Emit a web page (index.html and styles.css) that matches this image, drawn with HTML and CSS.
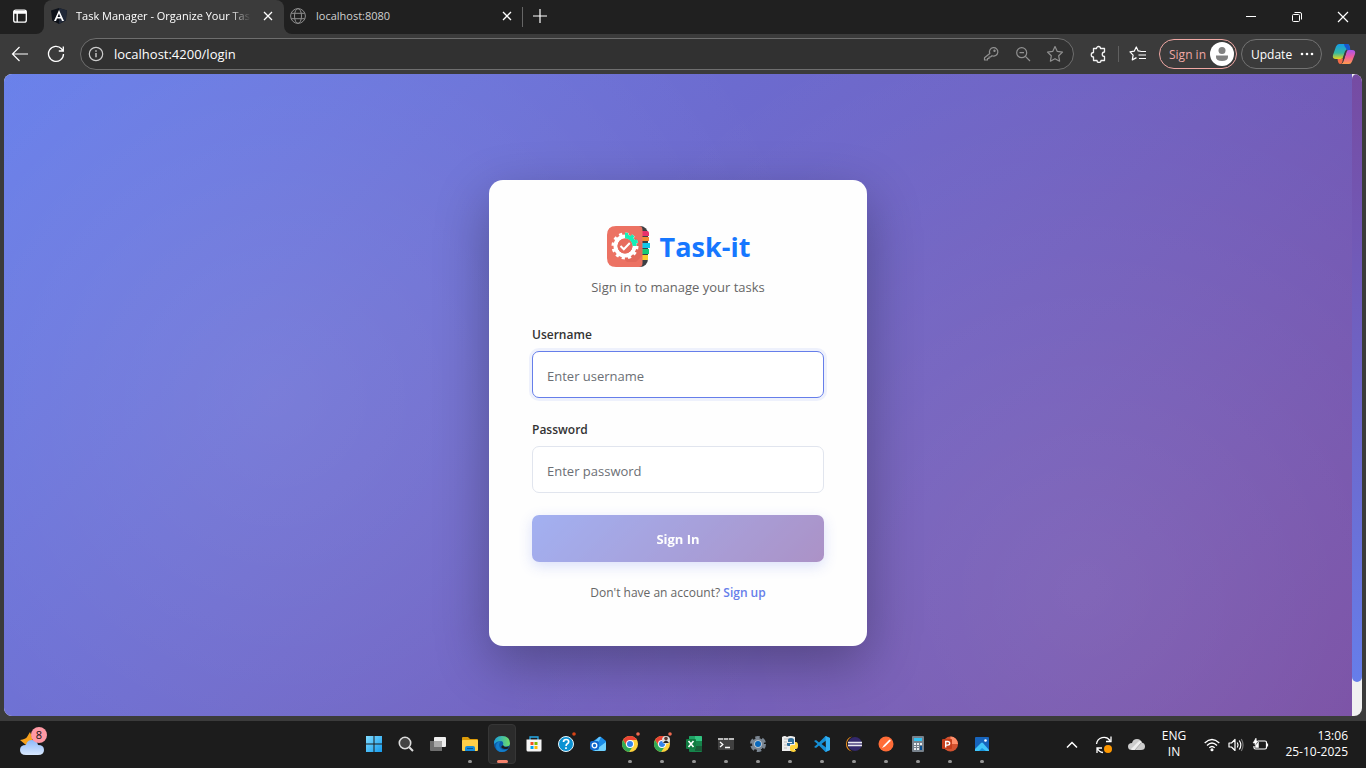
FILE: index.html
```
<!DOCTYPE html>
<html lang="en">
<head>
<meta charset="utf-8">
<meta name="viewport" content="width=device-width, initial-scale=1">
<title>Task Manager - Organize Your Tasks</title>
<link rel="stylesheet" href="styles.css">
</head>
<body>
<div class="desktop">
  <header class="browser">
    <div class="tabstrip">
      <div class="strip-start">
        <button class="icon-btn" type="button" aria-label="Tab actions">
          <svg width="16" height="16" viewBox="0 0 16 16" fill="none" stroke="#fff" stroke-width="1.3"><rect x="1.7" y="2.2" width="12.6" height="12" rx="2"/><path d="M1.7 3.7h12.6M2 5h12M5.2 5v9" stroke-width="1.4"/></svg>
        </button>
      </div>
      <div class="tab tab-active">
        <svg width="16" height="16" viewBox="0 0 16 16"><path d="M8 0l8 2.6-1.2 10L8 16l-6.800-3.400L0 2.600z" fill="#0d1119"/><path d="M8 0l8 2.600-1.200 10L8 16z" fill="#202838"/><path d="M8 2L3 13h2l1-2.500h4l1 2.500h2zm0 3.500L9.400 9H6.600z" fill="#fff"/></svg>
        <span class="tab-title">Task Manager - Organize Your Tas</span>
        <button class="close-btn" type="button" aria-label="Close tab"><svg width="10" height="10" viewBox="0 0 10 10" stroke="#fff" stroke-width="1.3"><path d="M1 1l8 8M9 1l-8 8"/></svg></button>
      </div>
      <div class="strip-rest">
        <div class="tab tab-idle">
          <svg width="16" height="16" viewBox="0 0 16 16" fill="none" stroke="#8d8d8d"><circle cx="8" cy="8" r="7.400"/><ellipse cx="8" cy="8" rx="3.500" ry="7.400"/><path d="M1.200 5.300h13.600M1.200 10.700h13.600"/></svg>
          <span class="tab-title">localhost:8080</span>
          <button class="close-btn" type="button" aria-label="Close tab"><svg width="10" height="10" viewBox="0 0 10 10" stroke="#fff" stroke-width="1.3"><path d="M1 1l8 8M9 1l-8 8"/></svg></button>
        </div>
        <button class="new-tab" type="button" aria-label="New tab"><svg width="14" height="14" viewBox="0 0 14 14" stroke="#fff" stroke-width="1.2"><path d="M7 0v14M0 7h14"/></svg></button>
        <div class="window-controls">
          <button type="button" aria-label="Minimize"><svg width="12" height="12" viewBox="0 0 12 12" stroke="#fff"><path d="M1 5.500h10"/></svg></button>
          <button type="button" aria-label="Restore"><svg width="12" height="12" viewBox="0 0 12 12" fill="none" stroke="#fff"><rect x="1.500" y="3.500" width="7" height="7" rx="1"/><path d="M3.500 1.500h5.500q1.500 0 1.500 1.500v5.500"/></svg></button>
          <button type="button" aria-label="Close"><svg width="12" height="12" viewBox="0 0 12 12" stroke="#fff" stroke-width="1.200"><path d="M1 1l10 10M11 1L1 11"/></svg></button>
        </div>
      </div>
    </div>
    <div class="toolbar">
      <button class="nav-btn" type="button" aria-label="Back"><svg width="18" height="16" viewBox="0 0 18 16" fill="none" stroke="#fff" stroke-width="1.200"><path d="M17 8H1.500M8.500 1l-7 7 7 7"/></svg></button>
      <button class="nav-btn" type="button" aria-label="Refresh"><svg width="18" height="18" viewBox="0 0 18 18" fill="none" stroke="#fff" stroke-width="1.300"><path d="M16.500 9a7.500 7.500 0 1 1-2-5.200L16.200 6M16.300 1.500V6h-4.500"/></svg></button>
      <div class="address">
        <svg width="16" height="16" viewBox="0 0 16 16" fill="none" stroke="#ccc" stroke-width="1.200"><circle cx="8" cy="8" r="6.700"/><path d="M8 7v4.300M8 4.300v1.400" stroke-width="1.400"/></svg>
        <input class="url" type="text" aria-label="Address" value="localhost:4200/login">
        <button class="address-btn" type="button" aria-label="Passwords"><svg width="16" height="16" viewBox="0 0 16 16" fill="none" stroke="#919191" stroke-width="1.200" stroke-linejoin="round"><path d="M6.800 7.500a4.200 4.200 0 1 1 2.200 2.200L7.500 11H6v1.500H4.500V14H1.500v-2.200z"/><circle cx="11.500" cy="4.700" r=".6" fill="#919191"/></svg></button>
        <button class="address-btn" type="button" aria-label="Zoom"><svg width="16" height="16" viewBox="0 0 16 16" fill="none" stroke="#919191" stroke-width="1.200"><circle cx="6.700" cy="6.700" r="5"/><path d="M4.500 6.700H9M10.400 10.400L15 15"/></svg></button>
        <button class="address-btn" type="button" aria-label="Favorite"><svg width="18" height="18" viewBox="0 0 18 18" fill="none" stroke="#919191" stroke-width="1.200" stroke-linejoin="round"><path d="M9 1.500l2.300 4.900 5.200.700-3.800 3.700.900 5.400L9 13.700l-4.600 2.500.900-5.400L1.500 7.100l5.200-.700z"/></svg></button>
      </div>
      <button class="ext-btn" type="button" aria-label="Extensions"><svg width="18" height="18" viewBox="0 0 18 18" fill="none" stroke="#f3f3f3" stroke-width="1.300" stroke-linejoin="round"><path d="M4.500 3.500h3a2 2 0 0 1 4 0h4V7a2 2 0 0 0 0 4.500V15.500h-3.500a2 2 0 0 1-4 0H4.500V12a2.200 2.200 0 0 1 0-4.500z"/></svg></button>
      <span class="divider"></span>
      <button class="fav-btn" type="button" aria-label="Favorites"><svg width="18" height="18" viewBox="0 0 18 18" fill="none" stroke="#fff" stroke-width="1.200" stroke-linejoin="round"><path d="M11.500 6.200L9.200 5.900 7.300 2 5.200 6.200l-4.200.700 3.100 3.200-.800 4.800 4.200-2.300M11.500 6.500h5.500M9.500 10h7.500M10 13.500h7"/></svg></button>
      <button class="pill pill-signin" type="button"><span>Sign in</span><svg width="24" height="24" viewBox="0 0 24 24"><circle cx="12" cy="12" r="12" fill="#fff"/><circle cx="12" cy="8.500" r="3.500" fill="#818181"/><path d="M6 13.500h12v1.500q0 4-6 4t-6-4z" fill="#818181"/></svg></button>
      <button class="pill pill-update" type="button"><span>Update</span><svg width="14" height="4" viewBox="0 0 14 4" fill="#fff"><circle cx="2" cy="2" r="1.300"/><circle cx="7" cy="2" r="1.300"/><circle cx="12" cy="2" r="1.300"/></svg></button>
      <button class="copilot" type="button" aria-label="Copilot">
        <svg width="24" height="22" viewBox="0 0 24 22">
          <defs><linearGradient id="cb" x2="0" y2="1"><stop stop-color="#149ce8"/><stop offset=".6" stop-color="#37b8a0"/><stop offset="1" stop-color="#e9d51c"/></linearGradient><linearGradient id="cp" x2="0" y2="1"><stop stop-color="#a855ee"/><stop offset=".5" stop-color="#f05d9c"/><stop offset="1" stop-color="#ff9c4b"/></linearGradient></defs>
          <path d="M7 1h8q2 0 2.500 2l.5 3h-2q-2 0-2.600 2l-2 6q-.6 2-2.400 2H4q-4 0-3-4L4 3.500Q5 1 7 1z" fill="url(#cb)"/><path d="M12 1h3.500q1.500 0 2 2l1 4h-3.500L12.500 3z" fill="#1757d0"/>
          <path d="M17 21H9q2-.5 2.700-3l2.600-9q.5-2 2.500-2H20q4 0 3 4l-3 7.500Q19 21 17 21z" fill="url(#cp)"/><path d="M5.500 16H9q1.500 0 2.300-2l-1 5q-.5 2-2 2-2.300 0-2.800-5z" fill="#f36b48"/>
          <path d="M14 8l-2.700 8" stroke="#3b3b3b" stroke-width="1.600"/>
        </svg>
      </button>
    </div>
  </header>

  <div class="viewport">
    <main class="page">
      <form class="card">
        <div class="brand">
          <svg width="44" height="44" viewBox="0 0 44 44" aria-hidden="true">
            <rect x="12" y="1" width="30" height="41" rx="8" fill="#3c3f43"/>
            <path d="M36 6h5q2 0 2 2v3h-7z" fill="#e8306c"/><path d="M36 12h7v4h-7z" fill="#f28a35"/><path d="M36 18h8v5h-8z" fill="#10c7e8"/><path d="M36 24h7v5h-7z" fill="#13ca79"/><path d="M36 30h6v5h-6z" fill="#f5cb2e"/>
            <path d="M10 1h23q3.500 0 3.500 4v33q0 4-3.500 4H10q-9 0-9-9V10q0-9 9-9z" fill="#ec7263"/>
            <path d="M30 13l6 6v12l-6 6h-9l-9-9z" fill="#e2695b"/>
            <circle cx="19" cy="21" r="12" fill="none" stroke="#fff" stroke-width="3" stroke-dasharray="3.140 3.143"/>
            <circle cx="19" cy="21" r="9.500" fill="none" stroke="#fff" stroke-width="4"/>
            <path d="M19 9a12 12 0 0 1 12 12" fill="none" stroke="#16efb7" stroke-width="3" stroke-dasharray="3.140 3.143"/>
            <path d="M19 11.500a9.500 9.500 0 0 1 9.500 9.500" fill="none" stroke="#16efb7" stroke-width="4"/>
            <circle cx="19" cy="21" r="7.500" fill="#e76b5d"/>
            <path d="M14.500 21l3.300 3.300 6-6.300" fill="none" stroke="#fff" stroke-width="2"/>
          </svg>
          <h1 class="brand-name">Task-it</h1>
        </div>
        <p class="tagline">Sign in to manage your tasks</p>
        <div class="field">
          <label for="username">Username</label>
          <input class="control control-focus" id="username" type="text" placeholder="Enter username">
        </div>
        <div class="field">
          <label for="password">Password</label>
          <input class="control" id="password" type="password" placeholder="Enter password">
        </div>
        <button class="submit" type="submit">Sign In</button>
        <p class="signup">Don't have an account? <a href="#signup">Sign up</a></p>
      </form>
    </main>
    <div class="scrollbar"><div class="thumb"></div></div>
  </div>

  <footer class="taskbar">
    <div class="weather">
      <button class="weather-btn" type="button" aria-label="Weather">
        <svg width="28" height="30" viewBox="0 0 28 30"><defs><linearGradient id="wc" x2="0" y2="1"><stop stop-color="#8db8f8"/><stop offset="1" stop-color="#d9e9ff"/></linearGradient></defs><path d="M10 5q3 6 3 14l-7-1-6-5q6-1 7-3z" fill="#f7a11c"/><path d="M6 28q-6 0-6-5t6-5q1-5 6-5t6 5q6 0 6 5t-6 5z" fill="url(#wc)"/></svg>
        <span class="badge">8</span>
      </button>
    </div>
    <nav class="apps" aria-label="Taskbar apps">
      <button class="app" type="button" aria-label="Start"><svg width="16" height="16" viewBox="0 0 16 16"><defs><linearGradient id="wn" x2="1" y2="1"><stop stop-color="#80dcff"/><stop offset="1" stop-color="#159bed"/></linearGradient></defs><path d="M0 0h7.500v7.500H0zM8.500 0H16v7.500H8.500zM0 8.500h7.500V16H0zM8.500 8.500H16V16H8.500z" fill="url(#wn)"/></svg></button>
      <button class="app" type="button" aria-label="Search"><svg width="16" height="16" viewBox="0 0 16 16"><circle cx="7" cy="7" r="5.700" fill="#444" stroke="#ddd" stroke-width="1.600"/><path d="M11.200 11.200L15 15" stroke="#ddd" stroke-width="2"/></svg></button>
      <button class="app" type="button" aria-label="Task view"><svg width="16" height="16" viewBox="0 0 16 16"><rect x="4" y="1" width="12" height="10" rx="1" fill="#eee"/><path d="M0 5h11q1 0 1 1v9H1q-1 0-1-1z" fill="#6f6f6f"/><path d="M4 5h7q1 0 1 1v5H4z" fill="#aaa"/></svg></button>
      <button class="app running" type="button" aria-label="File Explorer"><svg width="16" height="16" viewBox="0 0 16 16"><path d="M0 2q0-1 1-1h5l2 2h7q1 0 1 1v4H0z" fill="#dc9b09"/><rect y="4" width="16" height="11" rx="1" fill="#ffcf48"/><path d="M3 15v-3q0-2 2-2h6q2 0 2 2v3z" fill="#168bd8"/><path d="M5 12h6v1H5z" fill="#07569a"/></svg></button>
      <button class="app app-current" type="button" aria-label="Edge"><svg width="16" height="16" viewBox="0 0 16 16"><defs><linearGradient id="eg" x2="1"><stop stop-color="#1a9ddc"/><stop offset="1" stop-color="#70df65"/></linearGradient></defs><circle cx="8" cy="8" r="8" fill="#0b5fad"/><path d="M0 8Q0 0 8 0t8 7.500q0 3-4 3-3 0-3-1.500 1-4-2.500-4T0 8z" fill="url(#eg)"/><path d="M7 5q-4 4 0 8 3 2 7 0-2 3-6 3-6 0-6-6 0-4 5-5z" fill="#137dca"/><path d="M9 9q1 3 6 1.300l-1 2.200q-5 1.500-7-1.500z" fill="#1d1d1f"/></svg></button>
      <button class="app" type="button" aria-label="Store"><svg width="16" height="16" viewBox="0 0 16 16"><path d="M4 4V1h8v3" fill="none" stroke="#24a9e7" stroke-width="1.300"/><path d="M.5 3.500h15V14q0 1.500-1.500 1.500H2Q.5 15.500.5 14z" fill="#f5f5f5"/><path d="M4.500 6h3v3h-3z" fill="#f25022"/><path d="M8.500 6h3v3h-3z" fill="#7fba00"/><path d="M4.500 10h3v3h-3z" fill="#00a4ef"/><path d="M8.500 10h3v3h-3z" fill="#ffb900"/></svg></button>
      <button class="app" type="button" aria-label="Get Help"><svg width="20" height="26" viewBox="0 0 20 26"><circle cx="10" cy="13" r="7.500" fill="#0b92d3" stroke="#e8f6fd" stroke-width="1"/><path d="M7.500 11q0-2.500 2.600-2.500t2.600 2.300q0 1.300-1.400 2-1.200.7-1.200 2.200M10 16.200v1.800" fill="none" stroke="#fff" stroke-width="1.700"/><circle cx="18" cy="3" r="1.800" fill="#d84315"/></svg></button>
      <button class="app" type="button" aria-label="Outlook"><svg width="16" height="16" viewBox="0 0 16 16"><path d="M2 6l7-5q1-.6 2 0l5 4v8q0 2-2 2H4q-2 0-2-2z" fill="#198ce8"/><path d="M3 7l6-6q1-.5 2 0L7 9z" fill="#62c4ff"/><path d="M4 15L16 6v7q0 2-2 2z" fill="#70d2ff"/><rect y="5" width="9" height="9" rx="2" fill="#1267cc"/><circle cx="4.500" cy="9.500" r="2.300" fill="none" stroke="#fff" stroke-width="1.300"/></svg></button>
      <button class="app running" type="button" aria-label="Chrome"><svg width="20" height="26" viewBox="0 0 20 26"><circle cx="10" cy="13" r="8" fill="#ffd23c"/><path d="M3.100 9A8 8 0 0 1 17 9h-7l-3 6z" fill="#ea4335"/><path d="M3.100 9a8 8 0 0 0 6 12l4-6H6.600z" fill="#30a955"/><circle cx="10" cy="13" r="4" fill="#fff"/><circle cx="10" cy="13" r="3" fill="#3283ed"/><circle cx="18" cy="3" r="1.800" fill="#ef6950"/></svg></button>
      <button class="app running" type="button" aria-label="Chrome profile"><svg width="20" height="26" viewBox="0 0 20 26"><circle cx="10" cy="13" r="8" fill="#ffd23c"/><path d="M3.100 9A8 8 0 0 1 17 9h-7l-3 6z" fill="#ea4335"/><path d="M3.100 9a8 8 0 0 0 6 12l4-6H6.600z" fill="#30a955"/><circle cx="10" cy="13" r="4" fill="#fff"/><circle cx="10" cy="13" r="3" fill="#3283ed"/><circle cx="14" cy="9" r="4" fill="#ddd"/><circle cx="14" cy="7.500" r="1.800" fill="#59382f"/><path d="M11 12q3-5 6 0z" fill="#222"/><circle cx="18" cy="3" r="1.800" fill="#ef6950"/></svg></button>
      <button class="app running" type="button" aria-label="Excel"><svg width="16" height="16" viewBox="0 0 16 16"><rect x="3" width="13" height="16" rx="1" fill="#16844b"/><path d="M9 0h6q1 0 1 1v4H9z" fill="#32c481"/><path d="M3 1q0-1 1-1h5v5H3z" fill="#20a366"/><path d="M9 10h7v5H9z" fill="#185c37"/><rect y="3" width="10" height="10" rx="1" fill="#107c41"/><path d="M2.500 5l5 6M7.500 5l-5 6" stroke="#fff" stroke-width="1.600"/></svg></button>
      <button class="app running" type="button" aria-label="Terminal"><svg width="16" height="12" viewBox="0 0 16 12"><rect width="16" height="12" rx="1" fill="#414141"/><path d="M0 0h16v2H0z" fill="#bbb"/><path d="M5 0h1v2H5zM10 0h1v2h-1z" fill="#555"/><path d="M2 4l2.800 2.500L2 9M7 9.500h5" fill="none" stroke="#fff" stroke-width="1.300"/></svg></button>
      <button class="app running" type="button" aria-label="Settings"><svg width="16" height="16" viewBox="0 0 16 16"><circle cx="8" cy="8" r="6" fill="#7b8692"/><circle cx="8" cy="8" r="6.500" fill="none" stroke="#7b8692" stroke-width="3" stroke-dasharray="4.300 2.507"/><circle cx="8" cy="8" r="3.800" fill="#c8d4de"/><circle cx="8" cy="8" r="3" fill="#0868bc"/></svg></button>
      <button class="app running" type="button" aria-label="Python"><svg width="16" height="16" viewBox="0 0 16 16"><path d="M0 1q3-2 5 0 3-2 8 0v14H0z" fill="#eee"/><path d="M2 3h8M2 6h3M2 9h3M2 12h3" stroke="#bbb"/><path d="M5 9V7h5V6H6V4q0-2 3-2t3 2v4H8v2H6q-1 0-1-1z" fill="#306f9c"/><path d="M8 11q0-2 2-2h3V6h1q2 0 2 3.500T14 13h-2v1h2q0 2-2.500 2T8 14z" fill="#ffd43b"/></svg></button>
      <button class="app running" type="button" aria-label="Visual Studio Code"><svg width="16" height="16" viewBox="0 0 16 16"><path d="M11.500 0L16 2v12l-4.500 2L5 9.500 2 12l-2-1 3.500-3L0 5l2-1 3 2.500zM12 4.500L7.500 8l4.500 3.500z" fill="#168fd5"/><path d="M11.500 0L16 2v12l-4.500 2 .5-2z" fill="#31aef2"/></svg></button>
      <button class="app running" type="button" aria-label="Eclipse"><svg width="16" height="16" viewBox="0 0 16 16"><path d="M6 .5Q1 3 1 8t5 7.500Q0 14 0 8T6 .5z" fill="#f7941e"/><circle cx="9" cy="8" r="7" fill="#33286b"/><path d="M2 6.500h14M2 9.500h14" stroke="#e8e7ef" stroke-width="1.300"/><path d="M2 8h14" stroke="#8d86ad"/></svg></button>
      <button class="app running" type="button" aria-label="Postman"><svg width="16" height="16" viewBox="0 0 16 16"><circle cx="8" cy="8" r="7.500" fill="#ff6c37"/><path d="M4 12l2-3 5-5q1-1 1.500 0t-.500 1.500L7 10.500z" fill="#fff"/></svg></button>
      <button class="app running" type="button" aria-label="Calculator"><svg width="12" height="16" viewBox="0 0 12 16"><rect width="12" height="16" rx="1" fill="#77818b"/><path d="M2 2h8v3H2z" fill="#32c2f3"/><path d="M2 7h2v2H2zM5 7h2v2H5zM8 7h2v2H8zM2 10h2v1H2zM5 10h2v1H5zM2 12h2v2H2zM5 12h2v2H5z" fill="#e9edf1"/><path d="M8 10h2v4H8z" fill="#064f93"/></svg></button>
      <button class="app running" type="button" aria-label="PowerPoint"><svg width="16" height="16" viewBox="0 0 16 16"><circle cx="8.500" cy="8" r="7.500" fill="#d35230"/><path d="M8.500.5A7.500 7.500 0 0 1 16 8H8.500z" fill="#ff8f6b"/><rect y="3" width="10" height="10" rx="1" fill="#c43e1c"/><path d="M3.700 11.500V5.500h2q2 0 2 1.800t-2 1.800h-2" fill="none" stroke="#fff" stroke-width="1.400"/></svg></button>
      <button class="app running" type="button" aria-label="Photos"><svg width="14" height="14" viewBox="0 0 14 14"><rect width="14" height="14" rx="1" fill="#1764bc"/><path d="M0 12l6-6q1-1 2 0l6 7v1H0z" fill="#41c6fa"/><path d="M4 14l3-3 4 3z" fill="#1996df"/><circle cx="10.500" cy="3.500" r="1.300" fill="#fff"/></svg></button>
    </nav>
    <div class="tray">
      <button class="tray-btn" type="button" aria-label="Show hidden icons"><svg width="12" height="8" viewBox="0 0 12 8" fill="none" stroke="#fff" stroke-width="1.500"><path d="M1 6.500l5-5 5 5"/></svg></button>
      <button class="tray-btn" type="button" aria-label="Windows Update"><svg width="18" height="18" viewBox="0 0 18 18" fill="none" stroke="#fff" stroke-width="1.300"><path d="M1.500 8A7.500 7.500 0 0 1 15 4.500M16 .5v5h-5M2 17v-5h5M2.500 12.500Q4 16 8 16.500"/><circle cx="13" cy="13" r="4" fill="#ff9800" stroke="none"/></svg></button>
      <button class="tray-btn" type="button" aria-label="OneDrive"><svg width="17" height="12" viewBox="0 0 17 12"><path d="M4 11q-4 0-4-3.500T4 4q1-4 5-4t4.500 3.500Q17 4 17 7.500T13 11z" fill="#ccc"/><path d="M3 10l7-7q2-2 4 0l-7 8H4z" fill="#eee"/><path d="M7 11l6-7" stroke="#aaa"/></svg></button>
      <button class="lang" type="button"><span>ENG</span><span>IN</span></button>
      <button class="status" type="button" aria-label="Network, volume and battery">
        <svg width="16" height="14" viewBox="0 0 16 14" fill="none" stroke="#fff" stroke-width="1.300"><path d="M.7 5q7.300-7 14.600 0M3 7.500q5-5 10 0M5.300 9.800q2.700-2.600 5.400 0"/><circle cx="8" cy="11.800" r=".9" fill="#fff"/></svg>
        <svg width="16" height="14" viewBox="0 0 16 14" fill="none" stroke="#fff" stroke-width="1.200" stroke-linejoin="round"><path d="M1 5h2.500L7 1.500v11L3.500 9H1zM9.300 4.500q1.500 2.500 0 5M11.300 2.500q3 4.500 0 9"/><path d="M13.300 1q3.500 6 0 12" stroke="#777"/></svg>
        <svg width="17" height="14" viewBox="0 0 17 14" fill="none" stroke="#fff" stroke-width="1.200"><path d="M6 3h7q1.500 0 1.500 1.500v5q0 1.500-1.500 1.500H3.500Q2 11 2 9.500V8M15.500 5.500v3"/><path d="M4 0L1 5h2v2l3-4H4.500zM3.500 9.500v-2l3-3.500v5.500z" fill="#fff" stroke-width=".5"/></svg>
      </button>
      <button class="clock" type="button"><span>13:06</span><span>25-10-2025</span></button>
    </div>
  </footer>
</div>
</body>
</html>
```
FILE: styles.css
```
* {
  box-sizing: border-box;
}

body {
  margin: 0;
  font-family: "Open Sans", "Noto Sans", sans-serif;
  background: #3b3b3b;
}

button {
  display: flex;
  align-items: center;
  justify-content: center;
  margin: 0;
  padding: 0;
  border: 0;
  background: none;
  color: #fff;
  font: inherit;
}

svg {
  flex: none;
}

.desktop {
  display: flex;
  flex-direction: column;
  height: 100vh;
  overflow: hidden;
}

/* Browser chrome */
.tabstrip {
  display: flex;
  height: 34px;
  background: linear-gradient(#202020 50%, #3b3b3b 50%);
}

.strip-start {
  display: flex;
  align-items: center;
  width: 44px;
  padding-bottom: 2px;
  background: #202020;
  border-bottom-right-radius: 8px;
}

.icon-btn {
  width: 40px;
  height: 32px;
}

.tab {
  display: flex;
  align-items: center;
  gap: 10px;
  width: 240px;
  padding: 0 8px 2px 7px;
  line-height: 16px;
}

.tab-active {
  gap: 9px;
  background: #3b3b3b;
  border-radius: 8px 8px 0 0;
  color: #fff;
}

.tab-title {
  flex: 1;
  white-space: nowrap;
  font-size: 11px;
}

.tab-active .tab-title {
  mask-image: linear-gradient(90deg, #000 88%, transparent);
}

.tab-idle {
  width: 238px;
  height: 34px;
  padding-right: 7px;
  padding-left: 6px;
  color: #d0d0d0;
}

.close-btn {
  width: 16px;
  height: 24px;
}

.strip-rest {
  display: flex;
  flex: 1;
  background: #202020;
  border-bottom-left-radius: 8px;
}

.new-tab {
  position: relative;
  width: 36px;
  height: 32px;
}

.new-tab::before {
  content: "";
  position: absolute;
  left: 0;
  top: 7px;
  width: 1px;
  height: 20px;
  background: #666;
}

.window-controls {
  display: flex;
  margin-left: auto;
}

.window-controls button {
  width: 46px;
  height: 34px;
}

.toolbar {
  display: flex;
  align-items: center;
  height: 40px;
  padding-left: 2px;
}

.nav-btn {
  width: 36px;
  height: 32px;
}

.address {
  display: flex;
  flex: 1;
  align-items: center;
  height: 32px;
  margin-left: 6px;
  padding: 0 2px 0 7px;
  border: 1px solid #6e6e6e;
  border-radius: 16px;
  background: #313131;
}

.url {
  flex: 1;
  min-width: 0;
  padding: 0 0 0 10px;
  border: 0;
  outline: 0;
  background: none;
  color: #fff;
  font: 13px/18px "Open Sans", "Noto Sans", sans-serif;
}

.address-btn {
  width: 32px;
  height: 30px;
}

.ext-btn {
  width: 40px;
  height: 32px;
  margin-left: 4px;
}

.divider {
  width: 1px;
  height: 16px;
  background: #606060;
}

.fav-btn {
  width: 38px;
  height: 32px;
  margin-right: 2px;
}

.pill {
  justify-content: space-between;
  height: 30px;
  border: 1px solid #727272;
  border-radius: 15px;
  font-size: 12px;
}

.pill-signin {
  width: 78px;
  padding: 0 2px 0 9px;
  border-color: #f0a8a4;
  color: #f0a8a4;
}

.pill-update {
  width: 81px;
  margin-left: 4px;
  padding: 0 7px 0 9px;
}

.copilot {
  width: 44px;
  height: 32px;
}

/* Login page */
.viewport {
  display: flex;
  flex: 1;
  min-height: 0;
  margin: 0 4px 5px;
  overflow: hidden;
  border-radius: 8px;
  background: #f1f1f1;
}

.page {
  flex: 1;
  padding: 106px 16px 0;
  overflow: hidden;
  background:
    radial-gradient(circle at 20% 50%, rgba(255, 255, 255, 0.1), transparent 50%),
    radial-gradient(circle at 80% 80%, rgba(255, 255, 255, 0.1), transparent 50%),
    linear-gradient(135deg, #667eea 0%, #764ba2 100%);
}

.scrollbar {
  width: 10px;
  padding-bottom: 34px;
}

.thumb {
  height: 100%;
  border-radius: 5px;
  background: linear-gradient(#764ba2, #667eea);
}

.card {
  width: 100%;
  max-width: 378px;
  margin: 0 auto;
  padding: 45px 43px 43px;
  border-radius: 14px;
  background: #fefefe;
  box-shadow: 0 18px 54px rgba(0, 0, 0, 0.3);
}

.brand {
  display: flex;
  align-items: center;
  justify-content: center;
  gap: 10px;
  height: 44px;
}

.brand-name {
  margin: 0;
  color: #1677ff;
  font-size: 27px;
  font-weight: 700;
  line-height: 44px;
}

.tagline {
  margin: 7px 0 27px;
  color: #666;
  font-size: 13px;
  line-height: 22px;
  text-align: center;
}

.field {
  margin-bottom: 22px;
}

.field label {
  display: block;
  margin-bottom: 6px;
  color: #333;
  font-size: 12px;
  font-weight: 600;
  line-height: 20px;
}

.control {
  display: block;
  width: 100%;
  height: 47px;
  padding: 3px 14px 0;
  border: 1px solid #e1e5ee;
  border-radius: 7px;
  outline: 0;
  background: #fff;
  color: #333;
  font: 13px/20px "Open Sans", "Noto Sans", sans-serif;
}

.control::placeholder {
  color: #6c6f75;
  opacity: 1;
}

.control-focus {
  border-color: #667eea;
  box-shadow: 0 0 0 3px rgba(102, 126, 234, 0.1);
}

.submit {
  width: 100%;
  height: 47px;
  border-radius: 7px;
  background: linear-gradient(135deg, #667eea, #764ba2);
  box-shadow: 0 4px 14px rgba(102, 126, 234, 0.4);
  font-size: 13px;
  font-weight: 700;
  opacity: 0.6;
}

.signup {
  margin: 20px 0 0;
  color: #666;
  font-size: 12px;
  line-height: 21px;
  text-align: center;
}

.signup a {
  color: #667eea;
  font-weight: 600;
  text-decoration: none;
}

/* Taskbar */
.taskbar {
  display: grid;
  grid-template-columns: 1fr auto 1fr;
  height: 47px;
  padding: 0 18px 0 8px;
  background: #1c1c1c;
}

.weather {
  display: flex;
  align-items: center;
  padding: 0 0 6px 12px;
}

.weather-btn {
  position: relative;
}

.badge {
  position: absolute;
  left: 11px;
  top: 0;
  width: 16px;
  height: 16px;
  border-radius: 8px;
  background: #ff99a4;
  color: #111;
  font-size: 11px;
  line-height: 16px;
}

.apps {
  display: flex;
}

.app {
  position: relative;
  width: 32px;
  height: 47px;
  padding-bottom: 1px;
}

.app-current::before {
  content: "";
  position: absolute;
  inset: 3px 2px 4px;
  border: 1px solid #363636;
  border-radius: 4px;
  background: #2b2b2b;
}

.app svg {
  position: relative;
}

.running::after,
.app-current::after {
  content: "";
  position: absolute;
  left: 14px;
  bottom: 5px;
  width: 4px;
  height: 3px;
  border-radius: 2px;
  background: #959595;
}

.app-current::after {
  left: 11px;
  width: 11px;
  background: #f4826c;
}

.tray {
  display: flex;
  justify-content: flex-end;
  font-size: 12px;
  line-height: 16px;
}

.tray-btn {
  width: 32px;
}

.lang,
.clock {
  flex-direction: column;
  padding-bottom: 1px;
}

.lang {
  width: 44px;
  margin-right: 4px;
}

.status {
  gap: 8px;
  width: 72px;
}

.clock {
  align-items: flex-end;
  width: 76px;
}
```
